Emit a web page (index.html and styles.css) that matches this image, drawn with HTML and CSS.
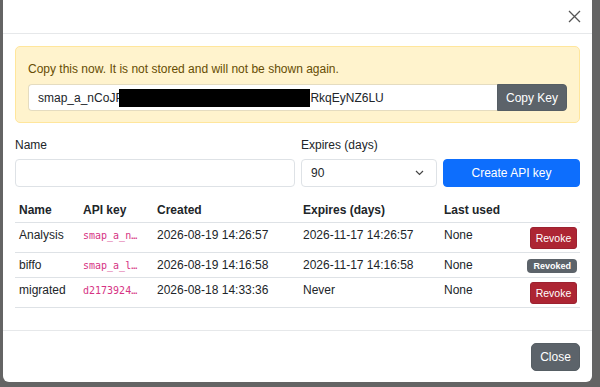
FILE: index.html
```html
<!DOCTYPE html>
<html lang="en">
<head>
    <meta charset="UTF-8">
    <title>API keys</title>
    <link rel="stylesheet" href="styles.css">
</head>
<body>
    <div class="modal">
        <div class="modal-header">
            <button class="btn-close" aria-label="Close">
                <svg width="13" height="13" viewBox="0 0 13 13"><path d="M1 1L12 12M12 1L1 12" stroke="#555" stroke-width="1.3" fill="none"/></svg>
            </button>
        </div>
        <div class="modal-body">
            <div class="alert">
                <p class="alert-text">Copy this now. It is not stored and will not be shown again.</p>
                <div class="input-group">
                    <div class="key-field">smap_a_nCoJP<span class="redact"></span>RkqEyNZ6LU</div>
                    <button class="btn btn-secondary btn-copy">Copy Key</button>
                </div>
            </div>

            <div class="create-row">
                <div class="field">
                    <label class="form-label">Name</label>
                    <div class="form-control"></div>
                </div>
                <div class="field">
                    <label class="form-label">Expires (days)</label>
                    <div class="form-control form-select">
                        <span>90</span>
                        <svg width="9" height="6" viewBox="0 0 9 6"><path d="M1 1L4.5 4.5L8 1" stroke="#444" stroke-width="1.2" fill="none"/></svg>
                    </div>
                </div>
                <div class="field field-btn">
                    <button class="btn btn-primary">Create API key</button>
                </div>
            </div>

            <table class="keys">
                <colgroup>
                    <col class="c-name"><col class="c-key"><col class="c-created"><col class="c-expires"><col class="c-used"><col>
                </colgroup>
                <thead>
                    <tr><th>Name</th><th>API key</th><th>Created</th><th>Expires (days)</th><th>Last used</th><th></th></tr>
                </thead>
                <tbody>
                    <tr>
                        <td>Analysis</td>
                        <td><code>smap_a_n…</code></td>
                        <td>2026-08-19 14:26:57</td>
                        <td>2026-11-17 14:26:57</td>
                        <td>None</td>
                        <td class="act"><button class="btn btn-danger btn-sm">Revoke</button></td>
                    </tr>
                    <tr>
                        <td>biffo</td>
                        <td><code>smap_a_l…</code></td>
                        <td>2026-08-19 14:16:58</td>
                        <td>2026-11-17 14:16:58</td>
                        <td>None</td>
                        <td class="act act-badge"><span class="badge">Revoked</span></td>
                    </tr>
                    <tr>
                        <td>migrated</td>
                        <td><code>d2173924…</code></td>
                        <td>2026-08-18 14:33:36</td>
                        <td>Never</td>
                        <td>None</td>
                        <td class="act"><button class="btn btn-danger btn-sm">Revoke</button></td>
                    </tr>
                </tbody>
            </table>
        </div>
        <div class="modal-footer">
            <button class="btn btn-secondary btn-close-modal">Close</button>
        </div>
    </div>
</body>
</html>
```

FILE: styles.css
```css
body {
    margin: 0;
    height: 387px;
    overflow: hidden;
    background: #646464;
    font-family: "Liberation Sans", Arial, sans-serif;
    font-size: 12px;
    line-height: 18px;
    color: #212529;
}

.modal {
    background: #fff;
    margin: -6px 8px 0 3px;
    border-radius: 6px;
    overflow: hidden;
}

.modal-header {
    height: 40px;
    border-bottom: 1px solid #e6e8ea;
    display: flex;
    justify-content: flex-end;
    align-items: flex-end;
    padding: 0 11px 10px 0;
    box-sizing: border-box;
}
.btn-close {
    border: 0;
    background: none;
    padding: 0;
    width: 13px;
    height: 13px;
    display: flex;
}

.modal-body {
    padding: 12px;
}

.alert {
    background: #fff3cd;
    border: 1px solid #ffe69c;
    border-radius: 5px;
    padding: 11px 12px 11px 12px;
    color: #664d03;
}
.alert-text {
    margin: 0 0 6px;
    padding-top: 2px;
}

.input-group {
    display: flex;
    height: 27px;
}
.key-field {
    flex: 1;
    background: #fff;
    border: 1px solid #e5dcc0;
    border-right: 0;
    border-radius: 4px 0 0 4px;
    padding: 0 9px;
    display: flex;
    align-items: center;
    color: #212529;
}
.redact {
    display: inline-block;
    width: 191px;
    height: 18px;
    background: #000;
    margin-left: -4px;
}

.btn {
    font-family: inherit;
    font-size: 12px;
    border: 1px solid transparent;
    border-radius: 4px;
    color: #fff;
    cursor: pointer;
}
.btn-secondary {
    background: #5c636a;
    border-color: #565e64;
}
.btn-copy {
    width: 70px;
    border-radius: 0 4px 4px 0;
    padding: 0;
}
.btn-primary {
    background: #0d6efd;
    border-color: #0d6efd;
    width: 100%;
    height: 28px;
}
.btn-danger {
    background: #ad2533;
    border-color: #9c2130;
}
.btn-sm {
    font-size: 10.5px;
    height: 22px;
    width: 47px;
    padding: 0;
    border-radius: 3px;
    display: inline-block;
    vertical-align: top;
}

.create-row {
    display: grid;
    grid-template-columns: 280px 136px 1fr;
    column-gap: 6px;
    align-items: end;
    margin-top: 13px;
}
.form-label {
    display: block;
    margin-bottom: 5px;
}
.form-control {
    height: 28px;
    box-sizing: border-box;
    border: 1px solid #dee2e6;
    border-radius: 4px;
}
.form-select {
    display: flex;
    align-items: center;
    justify-content: space-between;
    padding: 0 12px 0 9px;
}

.keys {
    width: 100%;
    margin: 11px 0 10px;
    border-collapse: collapse;
    table-layout: fixed;
}
.c-name { width: 64px; }
.c-key { width: 74px; }
.c-created { width: 146px; }
.c-expires { width: 141px; }
.c-used { width: 80px; }

.keys th,
.keys td {
    padding: 3px 4px;
    border-bottom: 1px solid #dee2e6;
    text-align: left;
    white-space: nowrap;
    vertical-align: top;
}
.keys th {
    font-weight: bold;
}
.keys td.act {
    text-align: right;
    padding: 4px 3px 3px 0;
    line-height: 0;
}
.keys td.act-badge {
    padding-top: 6px;
}
code {
    font-family: "DejaVu Sans Mono", "Liberation Mono", monospace;
    font-size: 10px;
    line-height: 1;
    color: #d63384;
}

.badge {
    display: inline-block;
    background: #5c636a;
    color: #fff;
    font-size: 9px;
    font-weight: bold;
    line-height: 14px;
    padding: 0 6px;
    border-radius: 4px;
}

.modal-footer {
    border-top: 1px solid #e6e8ea;
    padding: 12px 12px 11px;
    display: flex;
    justify-content: flex-end;
}
.btn-close-modal {
    width: 49px;
    height: 28px;
    border-radius: 5px;
    padding: 0;
}
```
